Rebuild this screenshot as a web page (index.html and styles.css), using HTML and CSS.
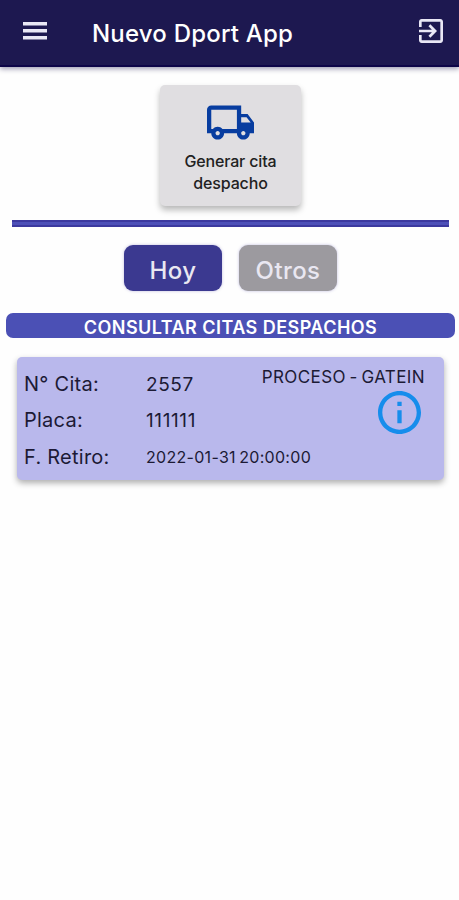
FILE: index.html
```html
<!DOCTYPE html>
<html lang="es">

<head>
    <meta charset="UTF-8">
    <meta name="viewport" content="width=device-width, initial-scale=1.0">
    <title>Nuevo Dport App</title>
    <link rel="stylesheet" href="styles.css">
</head>

<body>
    <header class="toolbar">
        <button class="icon-button" aria-label="Menu">
            <svg class="menu-icon" viewBox="0 0 24 18">
                <path d="M0 0h24v3.5H0zM0 7h24v3.5H0zM0 14h24v3.5H0z" />
            </svg>
        </button>
        <h1 class="title">Nuevo Dport App</h1>
        <button class="icon-button exit" aria-label="Salir">
            <svg class="exit-icon" viewBox="3 3 18 18">
                <path d="M10.09 15.59L11.5 17l5-5-5-5-1.41 1.41L12.67 11H3v2h9.67l-2.58 2.59zM19 3H5c-1.11 0-2 .9-2 2v4h2V5h14v14H5v-4H3v4c0 1.1.89 2 2 2h14c1.1 0 2-.9 2-2V5c0-1.1-.9-2-2-2z" />
            </svg>
        </button>
    </header>

    <main>
        <button class="generate">
            <svg class="truck-icon" viewBox="1 4 22 16">
                <path d="M20 8h-3V4H3c-1.1 0-2 .9-2 2v11h2c0 1.66 1.34 3 3 3s3-1.34 3-3h6c0 1.66 1.34 3 3 3s3-1.34 3-3h2v-5l-3-4zm-.5 1.5l1.96 2.5H17V9.5h2.5zM6 18c-.55 0-1-.45-1-1s.45-1 1-1 1 .45 1 1-.45 1-1 1zm2.22-3c-.55-.61-1.33-1-2.22-1s-1.67.39-2.22 1H3V6h12v9H8.22zM18 18c-.55 0-1-.45-1-1s.45-1 1-1 1 .45 1 1-.45 1-1 1z" />
            </svg>
            <span class="generate-text">Generar cita<br>despacho</span>
        </button>

        <hr class="divider">

        <div class="tabs">
            <button class="tab active">Hoy</button>
            <button class="tab">Otros</button>
        </div>

        <h2 class="section-title">CONSULTAR CITAS DESPACHOS</h2>

        <section class="card">
            <dl class="details">
                <dt>N° Cita:</dt>
                <dd class="number">2557</dd>
                <dt>Placa:</dt>
                <dd class="plate">111111</dd>
                <dt>F. Retiro:</dt>
                <dd class="date">2022-01-31 20:00:00</dd>
            </dl>
            <div class="status">
                <span class="status-text">PROCESO - GATEIN</span>
                <svg class="info-icon" viewBox="2 2 20 20">
                    <path d="M11 7h2v2h-2zm0 4h2v6h-2zm1-9C6.48 2 2 6.48 2 12s4.48 10 10 10 10-4.48 10-10S17.52 2 12 2zm0 18c-4.41 0-8-3.59-8-8s3.59-8 8-8 8 3.59 8 8-3.59 8-8 8z" />
                </svg>
            </div>
        </section>
    </main>
</body>

</html>
```

FILE: styles.css
```css
* {
    box-sizing: border-box;
}

body {
    margin: 0;
    min-height: 100vh;
    background: #fefefe;
    font-family: Inter, "Liberation Sans", sans-serif;
    color: #1c1a35;
}

button {
    border: none;
    padding: 0;
    font-family: inherit;
    cursor: pointer;
}

svg {
    display: block;
    fill: currentColor;
}

.toolbar {
    display: flex;
    align-items: center;
    height: 67px;
    padding: 0 16px 4px 23px;
    background: #1d1850;
    border-bottom: 2px solid #0d0548;
    box-shadow: 0 2px 5px rgba(20, 16, 70, 0.4);
    color: #e9e7f5;
}

.icon-button {
    background: none;
    color: inherit;
}

.menu-icon {
    width: 24px;
    height: 18px;
}

.title {
    margin: 6px 0 0 45px;
    font-size: 24px;
    line-height: 30px;
    font-weight: 500;
    letter-spacing: 0.2px;
    color: #fff;
}

.exit {
    margin-left: auto;
}

.exit-icon {
    width: 24px;
    height: 24px;
}

.generate {
    display: block;
    width: 141px;
    height: 121px;
    margin: 18px auto 14px 160px;
    padding-top: 8px;
    border-radius: 5px;
    background: #e0dee1;
    box-shadow: 0 4px 6px rgba(0, 0, 0, 0.28);
    color: #222;
}

.truck-icon {
    width: 47px;
    height: 35px;
    margin: 0 auto 10px;
    color: #083da0;
}

.generate-text {
    display: block;
    font-size: 16px;
    line-height: 22px;
    font-weight: 500;
    letter-spacing: -0.15px;
}

.divider {
    height: 7px;
    margin: 0 10px 0 12px;
    border: solid #3c399f;
    border-width: 2px 0;
    background: #4d50b8;
}

.tabs {
    display: flex;
    gap: 17px;
    margin: 18px 0 22px 124px;
}

.tab {
    width: 98px;
    height: 46px;
    padding-top: 5px;
    border-radius: 9px;
    background: #9c9a9f;
    box-shadow: 0 0 3px rgba(70, 60, 160, 0.35);
    color: #e9e7f1;
    font-size: 24px;
    font-weight: 500;
    letter-spacing: 0.4px;
}

.tab.active {
    background: #3b3990;
}

.section-title {
    height: 25px;
    margin: 0 4px 19px 6px;
    padding-top: 3px;
    border-radius: 7px;
    background: #4b50b5;
    color: #fff;
    font-size: 18px;
    line-height: 24px;
    font-weight: 600;
    letter-spacing: 0.46px;
    text-align: center;
}

.card {
    display: flex;
    justify-content: space-between;
    height: 123px;
    margin: 0 15px 0 17px;
    padding: 8px 19px 0 7px;
    border-radius: 5px;
    background: #b9b8ec;
    box-shadow: 0 3px 6px rgba(0, 0, 0, 0.32);
}

.details {
    display: grid;
    grid-template-columns: 122px auto;
    grid-template-rows: 38px 36px 37px;
    align-items: end;
    margin: 0;
    line-height: 37px;
    font-size: 20px;
    letter-spacing: 0.25px;
    white-space: nowrap;
}

.details dd {
    margin: 0;
}

.details .number {
    font-size: 19px;
    letter-spacing: 0.6px;
}

.details .plate {
    font-size: 19px;
    letter-spacing: 0.6px;
}

.details .date {
    font-size: 16px;
    letter-spacing: 0.3px;
    word-spacing: -1.5px;
}

.status {
    display: flex;
    flex-direction: column;
    align-items: flex-end;
    margin-left: -60px;
}

.status-text {
    font-size: 17px;
    line-height: 24px;
    letter-spacing: 0.4px;
    word-spacing: -1.5px;
    white-space: nowrap;
}

.info-icon {
    width: 43px;
    height: 43px;
    margin: 2px 4px 0 0;
    color: #168dec;
}
```
